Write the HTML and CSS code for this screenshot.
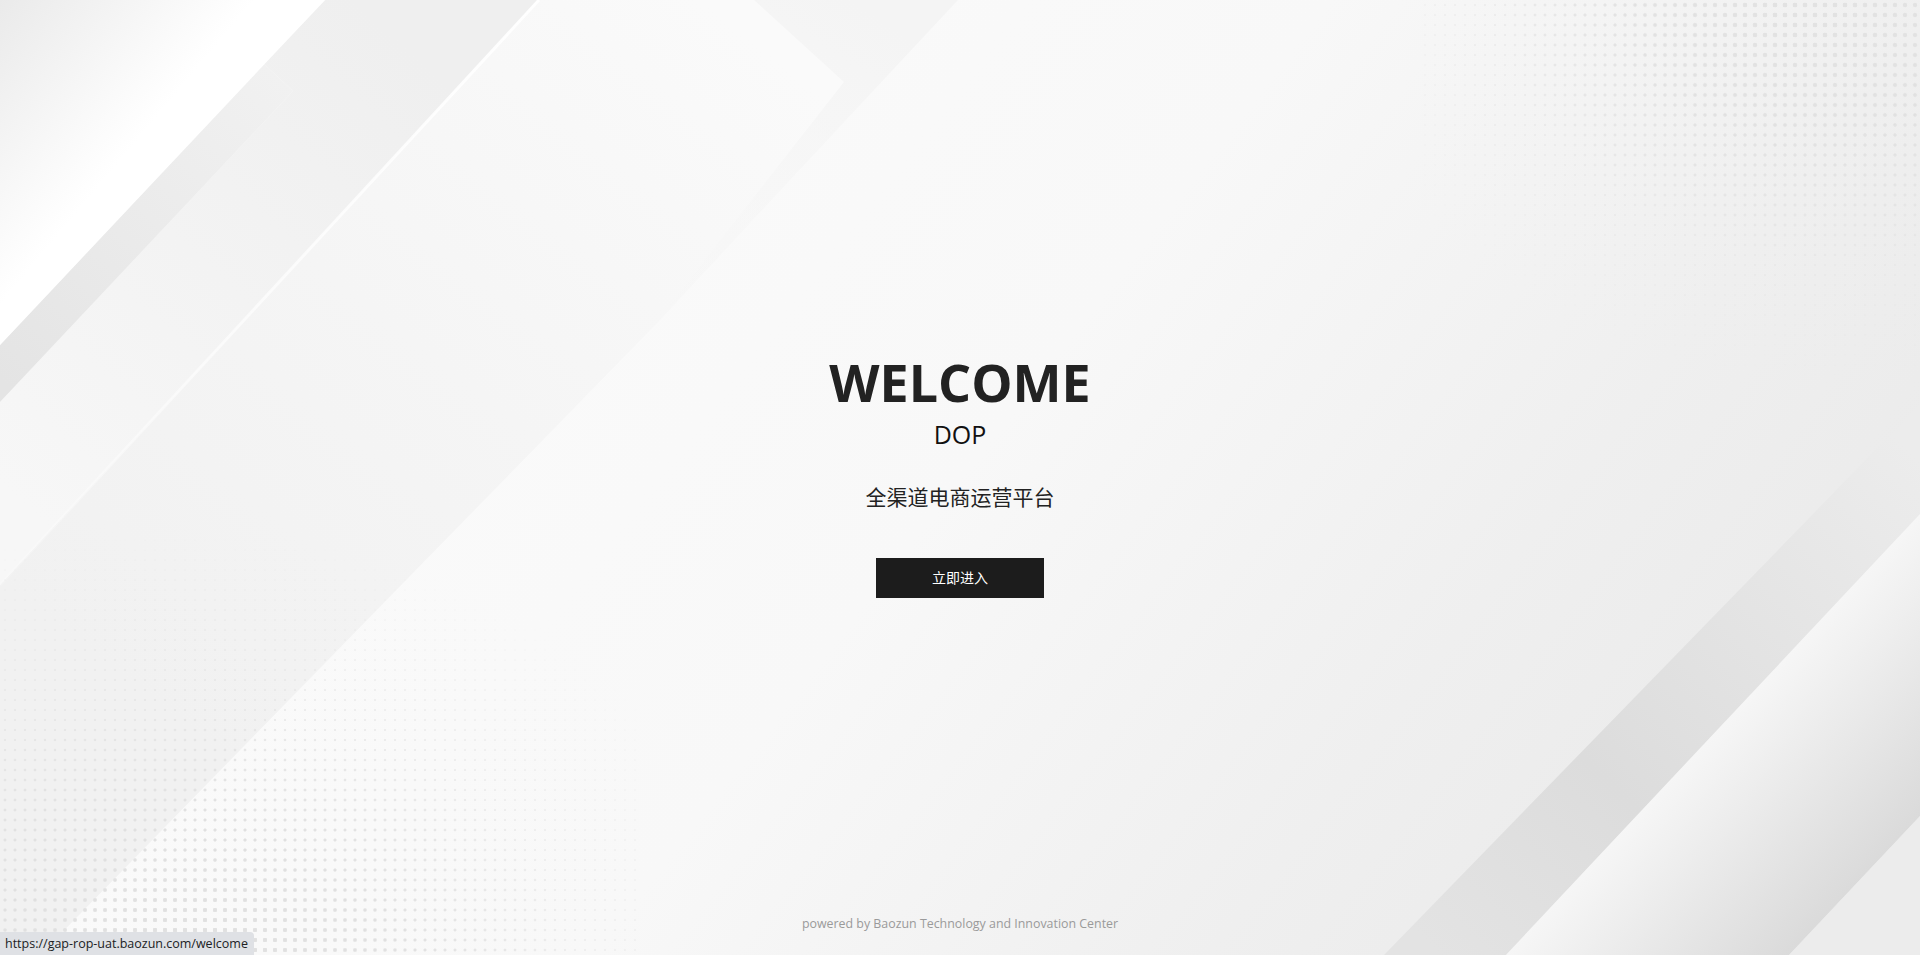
FILE: index.html
```html
<!DOCTYPE html>
<html lang="zh-CN">
<head>
<meta charset="utf-8">
<title>Welcome - DOP</title>
<link rel="stylesheet" href="styles.css">
</head>
<body>
<div class="page">
  <svg class="bg" viewBox="0 0 1920 955" preserveAspectRatio="none" aria-hidden="true">
    <defs>
      <linearGradient id="gBase" gradientUnits="userSpaceOnUse" x1="600" y1="150" x2="1700" y2="1000">
        <stop offset="0" stop-color="#fafafa"/>
        <stop offset="0.35" stop-color="#f8f8f8"/>
        <stop offset="0.7" stop-color="#efefef"/>
        <stop offset="1" stop-color="#e9e9e9"/>
      </linearGradient>
      <linearGradient id="gCorner" gradientUnits="userSpaceOnUse" x1="0" y1="0" x2="150" y2="125">
        <stop offset="0" stop-color="#eaeaea"/>
        <stop offset="1" stop-color="#ffffff"/>
      </linearGradient>
      <linearGradient id="gBand1" gradientUnits="userSpaceOnUse" x1="0" y1="380" x2="280" y2="78">
        <stop offset="0" stop-color="#e4e4e4"/>
        <stop offset="1" stop-color="#f1f1f1"/>
      </linearGradient>
      <linearGradient id="gBand2" gradientUnits="userSpaceOnUse" x1="420" y1="60" x2="20" y2="500">
        <stop offset="0" stop-color="#efefef"/>
        <stop offset="1" stop-color="#f7f7f7"/>
      </linearGradient>
      <linearGradient id="gBand3" gradientUnits="userSpaceOnUse" x1="700" y1="0" x2="150" y2="700">
        <stop offset="0" stop-color="#fafafa"/>
        <stop offset="0.5" stop-color="#f5f5f5"/>
        <stop offset="1" stop-color="#f1f1f1"/>
      </linearGradient>
      <linearGradient id="gStrip" gradientUnits="userSpaceOnUse" x1="850" y1="0" x2="650" y2="320">
        <stop offset="0" stop-color="#f4f4f4"/>
        <stop offset="1" stop-color="#f5f5f5" stop-opacity="0"/>
      </linearGradient>
      <linearGradient id="gLine" gradientUnits="userSpaceOnUse" x1="539" y1="0" x2="0" y2="585">
        <stop offset="0" stop-color="#ffffff" stop-opacity="1"/>
        <stop offset="0.6" stop-color="#ffffff" stop-opacity="0.6"/>
        <stop offset="1" stop-color="#ffffff" stop-opacity="0.15"/>
      </linearGradient>
      <linearGradient id="gR1" gradientUnits="userSpaceOnUse" x1="1920" y1="460" x2="1440" y2="955">
        <stop offset="0" stop-color="#ececec"/>
        <stop offset="0.65" stop-color="#dcdcdc"/>
        <stop offset="1" stop-color="#e3e3e3"/>
      </linearGradient>
      <linearGradient id="gR2" gradientUnits="userSpaceOnUse" x1="1698" y1="750" x2="1850" y2="893">
        <stop offset="0" stop-color="#f6f6f6"/>
        <stop offset="1" stop-color="#dadada"/>
      </linearGradient>
    </defs>
    <rect x="0" y="0" width="1920" height="955" fill="url(#gBase)"/>
    <polygon points="539,0 958,0 660,320 40,955 0,955 0,585" fill="url(#gBand3)"/>
    <polygon points="754,0 958,0 650,330 844,82" fill="url(#gStrip)"/>
    <polygon points="325,0 539,0 0,585 0,402 293,91 264,64" fill="url(#gBand2)"/>
    <polygon points="264,64 293,91 0,402 0,345" fill="url(#gBand1)"/>
    <polygon points="0,0 325,0 0,345" fill="url(#gCorner)"/>
    <line x1="539" y1="0" x2="0" y2="585" stroke="url(#gLine)" stroke-width="3"/>
    <polygon points="1920,404 1920,514 1506,955 1384,955" fill="url(#gR1)"/>
    <polygon points="1920,514 1920,816 1789,955 1506,955" fill="url(#gR2)"/>
    <polygon points="1920,816 1920,955 1789,955" fill="#ececec"/>
  </svg>
  <div class="dots dots-tr"></div>
  <div class="dots dots-tr dots-mid"></div>
  <div class="dots dots-tr dots-big"></div>
  <div class="dots dots-bl"></div>
  <div class="dots dots-bl dots-mid"></div>
  <div class="dots dots-bl dots-big"></div>

  <main class="hero">
    <h1 class="title">WELCOME</h1>
    <div class="sub">DOP</div>
    <p class="slogan">全渠道电商运营平台</p>
    <a class="enter" href="#">立即进入</a>
  </main>
  <footer class="footer">powered by Baozun Technology and Innovation Center</footer>
</div>
<div class="status">https://gap-rop-uat.baozun.com/welcome</div>
</body>
</html>
```

FILE: styles.css
```css
html, body {
  margin: 0;
  height: 100%;
}

body {
  font-family: "Open Sans", "Noto Sans CJK SC", sans-serif;
  background: #f8f8f8;
  overflow: hidden;
}

.page {
  position: relative;
  height: 955px;
  display: flex;
  flex-direction: column;
  overflow: hidden;
}

.bg {
  position: absolute;
  top: 0;
  left: 0;
  width: 100%;
  height: 100%;
  z-index: 0;
}

/* dotted halftone fields */
.dots {
  position: absolute;
  z-index: 0;
  background-size: 10px 10px;
}

.dots-tr {
  top: 0;
  right: 0;
  width: 500px;
  height: 400px;
  background-image: radial-gradient(circle, #e1e1e1 0.9px, rgba(225,225,225,0) 1.3px);
  -webkit-mask-image: radial-gradient(ellipse 480px 380px at 400px 0, #000 25%, rgba(0,0,0,0) 100%);
  mask-image: radial-gradient(ellipse 480px 380px at 400px 0, #000 25%, rgba(0,0,0,0) 100%);
}

.dots-tr.dots-mid {
  background-image: radial-gradient(circle, #e1e1e1 1.6px, rgba(225,225,225,0) 2px);
  -webkit-mask-image: radial-gradient(ellipse 320px 260px at 400px 0, #000 20%, rgba(0,0,0,0) 100%);
  mask-image: radial-gradient(ellipse 320px 260px at 400px 0, #000 20%, rgba(0,0,0,0) 100%);
}

.dots-tr.dots-big {
  background-image: radial-gradient(circle, #e2e2e2 2.2px, rgba(226,226,226,0) 2.6px);
  -webkit-mask-image: radial-gradient(ellipse 200px 150px at 390px 0, #000 20%, rgba(0,0,0,0) 100%);
  mask-image: radial-gradient(ellipse 200px 150px at 390px 0, #000 20%, rgba(0,0,0,0) 100%);
}

.dots-bl {
  left: 0;
  bottom: 0;
  width: 640px;
  height: 440px;
  background-image: radial-gradient(circle, #e0e0e0 0.9px, rgba(224,224,224,0) 1.3px);
  -webkit-mask-image: radial-gradient(ellipse 580px 430px at 170px 100%, #000 30%, rgba(0,0,0,0) 100%);
  mask-image: radial-gradient(ellipse 580px 430px at 170px 100%, #000 30%, rgba(0,0,0,0) 100%);
}

.dots-bl.dots-mid {
  background-image: radial-gradient(circle, #e0e0e0 1.5px, rgba(224,224,224,0) 1.9px);
  -webkit-mask-image: radial-gradient(ellipse 380px 240px at 190px 100%, #000 20%, rgba(0,0,0,0) 100%);
  mask-image: radial-gradient(ellipse 380px 240px at 190px 100%, #000 20%, rgba(0,0,0,0) 100%);
}

.dots-bl.dots-big {
  background-image: radial-gradient(circle, #e0e0e0 2.1px, rgba(224,224,224,0) 2.5px);
  -webkit-mask-image: radial-gradient(ellipse 220px 110px at 200px 100%, #000 20%, rgba(0,0,0,0) 100%);
  mask-image: radial-gradient(ellipse 220px 110px at 200px 100%, #000 20%, rgba(0,0,0,0) 100%);
}

/* centre content */
.hero {
  position: relative;
  z-index: 1;
  flex: 1;
  display: flex;
  flex-direction: column;
  align-items: center;
  padding-top: 346px;
}

.title {
  margin: 0;
  font-family: "Open Sans", sans-serif;
  font-size: 52px;
  line-height: 71px;
  font-weight: 700;
  color: #222222;
}

.sub {
  font-family: "Open Sans", sans-serif;
  font-size: 25px;
  line-height: 34px;
  color: #111111;
}

.slogan {
  margin: 30px 0 0;
  font-family: "Noto Sans CJK SC", sans-serif;
  font-size: 21px;
  line-height: 30px;
  color: #222222;
}

.enter {
  margin-top: 47px;
  width: 168px;
  height: 40px;
  display: flex;
  align-items: center;
  justify-content: center;
  background: #1c1c1c;
  color: #ffffff;
  font-family: "Noto Sans CJK SC", sans-serif;
  font-size: 14px;
  line-height: 20px;
  padding-bottom: 2px;
  box-sizing: border-box;
  text-decoration: none;
}

.footer {
  position: relative;
  z-index: 1;
  text-align: center;
  font-size: 12.4px;
  line-height: 18px;
  color: #9a9a9a;
  padding-bottom: 22px;
}

/* browser link-hover status bubble */
.status {
  position: fixed;
  left: 0;
  bottom: 0;
  height: 23px;
  width: 254px;
  box-sizing: border-box;
  padding: 0 5px;
  display: flex;
  align-items: center;
  background: #dfe1e5;
  border-top-right-radius: 4px;
  color: #202124;
  font-family: "Open Sans", sans-serif;
  font-size: 12.5px;
  white-space: nowrap;
  overflow: hidden;
  z-index: 5;
}
```
